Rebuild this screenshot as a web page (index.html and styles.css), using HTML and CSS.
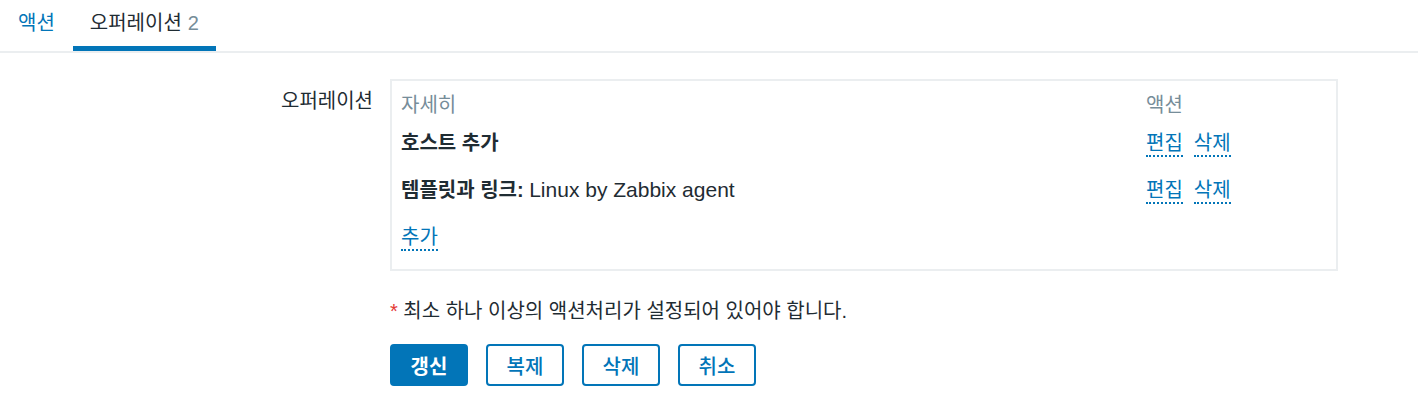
FILE: index.html
```html
<!DOCTYPE html>
<html lang="ko">

<head>
    <meta charset="UTF-8">
    <meta name="viewport" content="width=device-width, initial-scale=1.0">
    <title>액션 - 오퍼레이션</title>
    <link rel="stylesheet" href="styles.css">
</head>

<body>
    <div class="tabs">
        <a class="tab" href="#">액션</a>
        <a class="tab tab-active" href="#">오퍼레이션<span class="tab-count">2</span></a>
    </div>

    <form class="form" onsubmit="return false">
        <label class="form-label">오퍼레이션</label>
        <div class="form-field">
            <div class="op-box">
                <div class="op-row op-head">
                    <div>자세히</div>
                    <div>액션</div>
                </div>
                <div class="op-row">
                    <div><b>호스트 추가</b></div>
                    <div class="op-actions">
                        <a class="link" href="#">편집</a>
                        <a class="link" href="#">삭제</a>
                    </div>
                </div>
                <div class="op-row">
                    <div><b>템플릿과 링크:</b> <span class="op-value">Linux by Zabbix agent</span></div>
                    <div class="op-actions">
                        <a class="link" href="#">편집</a>
                        <a class="link" href="#">삭제</a>
                    </div>
                </div>
                <div class="op-row">
                    <div><a class="link" href="#">추가</a></div>
                </div>
            </div>
        </div>

        <div class="form-field form-note">
            <span class="asterisk">*</span> 최소 하나 이상의 액션처리가 설정되어 있어야 합니다.
        </div>

        <div class="form-field form-buttons">
            <button class="btn btn-main" type="submit">갱신</button>
            <button class="btn" type="button">복제</button>
            <button class="btn" type="button">삭제</button>
            <button class="btn" type="button">취소</button>
        </div>
    </form>
</body>

</html>
```

FILE: styles.css
```css
body {
    margin: 0;
    font-family: "Liberation Sans", "Noto Sans CJK KR", sans-serif;
    font-size: 20px;
    line-height: 24px;
    color: #1f2c33;
    background-color: #ffffff;
}

a {
    color: #0275b8;
    text-decoration: none;
}

/* tabs */
.tabs {
    display: flex;
    gap: 1px;
    padding-left: 1px;
    border-bottom: 2px solid #ebeef0;
}

.tab {
    padding: 0 17px;
    line-height: 46px;
    border-bottom: 5px solid transparent;
}

.tab-active {
    color: #1f2c33;
    border-bottom-color: #0275b8;
}

.tab-count {
    margin-left: 6px;
    color: #768d99;
}

/* form */
.form {
    display: grid;
    grid-template-columns: 373px 948px;
    column-gap: 17px;
    margin-top: 26px;
}

.form-label {
    padding-top: 10px;
    text-align: right;
}

.form-field {
    grid-column: 2;
}

.op-box {
    border: 2px solid #ebeef0;
    padding: 0 9px 3px;
}

.op-row {
    display: grid;
    grid-template-columns: 745px 181px;
    box-sizing: border-box;
    height: 47px;
    padding-top: 6px;
}

.op-head {
    height: 44px;
    padding-top: 12px;
    color: #768d99;
}

.op-value {
    font-size: 21px;
}

.op-actions {
    display: flex;
    align-items: flex-start;
    gap: 11px;
}

.link {
    padding-bottom: 1px;
    border-bottom: 2px dotted #0275b8;
}

.op-actions .link {
    padding-bottom: 0;
}

.form-note {
    margin-top: 28px;
}

.asterisk {
    color: #e33734;
}

.form-buttons {
    display: flex;
    gap: 18px;
    margin-top: 21px;
}

.btn {
    width: 78px;
    height: 42px;
    padding: 0;
    border: 2px solid #0275b8;
    border-radius: 4px;
    background-color: #ffffff;
    color: #0275b8;
    font-family: inherit;
    font-size: 20px;
    font-weight: 500;
}

.btn-main {
    background-color: #0275b8;
    color: #ffffff;
    font-weight: bold;
}
```
